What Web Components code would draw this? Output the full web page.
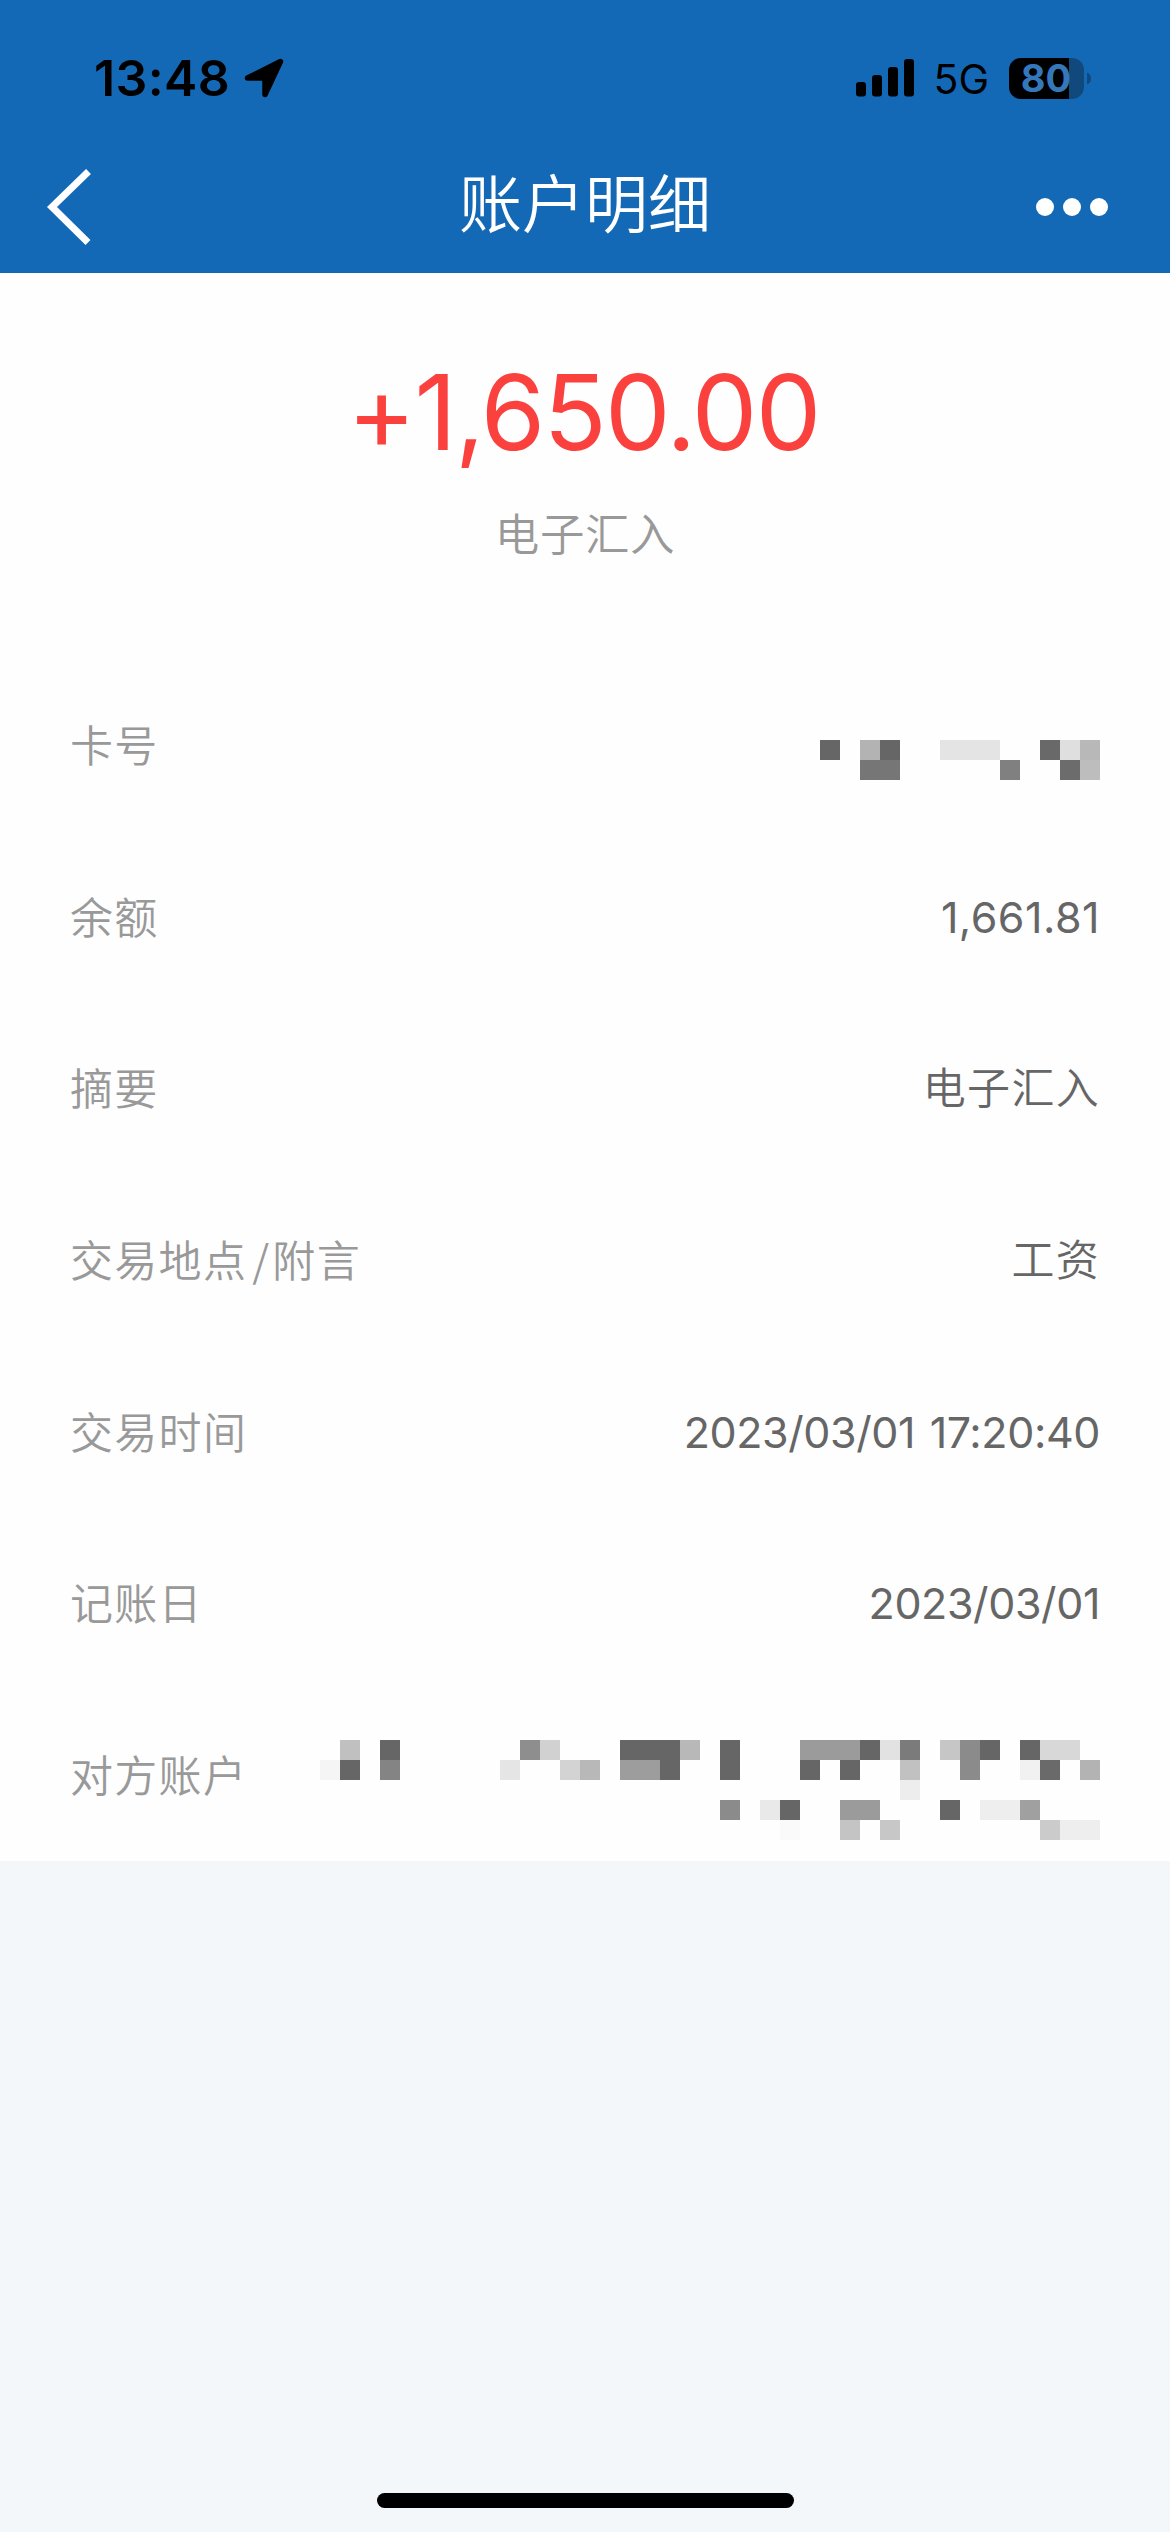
<!DOCTYPE html>
<html lang="zh-CN">
<head>
  <meta charset="UTF-8">
  <meta name="viewport" content="width=device-width, initial-scale=1.0">
  <title>账户明细</title>
  <style>
    body {
      margin: 0;
      background-color: #f3f7fa;
      font-family: Inter, "Noto Sans CJK SC", sans-serif;
    }
  </style>
</head>
<body>
  <account-screen>
    <status-bar slot="header" time="13:48" network="5G" battery="80"></status-bar>
    <nav-header slot="header">账户明细</nav-header>

    <amount-summary amount="+1,650.00">电子汇入</amount-summary>

    <detail-row label="卡号">
      <pixel-mosaic cols="14" rows="2" style="margin-top: 30px"
        cells="0,0,1,666 2,0,1,b3b3b3 3,0,1,666 2,1,2,767676 6,0,3,e4e4e4 9,1,1,808080 11,0,1,696969 12,0,1,dfdfdf 13,0,1,b8b8b8 12,1,1,6c6c6c 13,1,1,bdbdbd"></pixel-mosaic>
    </detail-row>
    <detail-row label="余额" style="--value-spacing: 0.5px">1,661.81</detail-row>
    <detail-row label="摘要" cjk>电子汇入</detail-row>
    <detail-row label="交易地点/附言" cjk>工资</detail-row>
    <detail-row label="交易时间">2023/03/01 17:20:40</detail-row>
    <detail-row label="记账日">2023/03/01</detail-row>
    <detail-row label="对方账户">
      <pixel-mosaic cols="39" rows="5" style="margin-top: 30px"
        cells="1,0,1,c0c0c0 3,0,1,666 10,0,1,8e8e8e 11,0,1,d1d1d1 15,0,3,666 18,0,1,b8b8b8 20,0,1,666 24,0,3,9b9b9b 27,0,1,666 28,0,1,e2e2e2 29,0,1,7b7b7b 31,0,1,c6c6c6 32,0,1,8b8b8b 33,0,1,666 35,0,1,666 36,0,2,d8d8d8
        0,1,1,f5f5f5 1,1,1,666 3,1,1,848484 9,1,1,e5e5e5 12,1,1,d3d3d3 13,1,1,b8b8b8 15,1,2,9d9d9d 17,1,1,666 20,1,1,666 24,1,1,666 26,1,1,666 29,1,1,c1c1c1 32,1,1,8b8b8b 35,1,1,f1f1f1 36,1,1,6a6a6a 38,1,1,b3b3b3
        29,2,1,ededed
        20,3,1,8b8b8b 22,3,1,e9e9e9 23,3,1,666 26,3,2,9b9b9b 31,3,1,666 33,3,2,eee 35,3,1,a0a0a0
        23,4,1,fafafa 26,4,1,c4c4c4 28,4,1,c7c7c7 36,4,1,cbcbcb 37,4,2,eee"></pixel-mosaic>
    </detail-row>
  </account-screen>

  <script>
    class AccountScreen extends HTMLElement {
      connectedCallback() {
        this.attachShadow({ mode: "open" });
        this.shadowRoot.innerHTML = `
          <style>
            :host {
              display: flex;
              flex-direction: column;
              height: 2532px;
              overflow: hidden;
            }

            header {
              height: 273px;
              background-color: #1469b6;
            }

            main {
              height: 1588px;
              background-color: #fefefe;
            }

            footer {
              flex: 1;
              display: flex;
              align-items: flex-end;
              justify-content: center;
              padding-bottom: 24px;
            }

            .home-indicator {
              width: 417px;
              height: 15px;
              margin-left: 1px;
              border-radius: 8px;
              background-color: #000;
            }
          </style>

          <header><slot name="header"></slot></header>
          <main><slot></slot></main>
          <footer><div class="home-indicator"></div></footer>
        `;
      }
    }

    class StatusBar extends HTMLElement {
      connectedCallback() {
        this.attachShadow({ mode: "open" });
        this.shadowRoot.innerHTML = `
          <style>
            :host {
              display: flex;
              justify-content: space-between;
              align-items: center;
              height: 156px;
              padding: 0 79px 0 94px;
              box-sizing: border-box;
              color: #000;
            }

            .left,
            .right {
              display: flex;
              align-items: center;
            }

            .time {
              font-size: 50px;
              font-weight: 600;
              letter-spacing: 0.4px;
            }

            .arrow {
              margin-left: 14px;
            }

            .network {
              margin: 2px 20px 0 19px;
              font-size: 41px;
            }

            .level {
              font-size: 38px;
              font-weight: 700;
            }

            svg {
              display: block;
              overflow: visible;
            }
          </style>

          <div class="left">
            <span class="time">${this.getAttribute("time")}</span>
            <svg class="arrow" width="40" height="40" viewBox="0 0 40 40">
              <path d="M36.500 3.500 L21 36.500 V20 H3.500 Z" stroke="#000" stroke-width="5.500" stroke-linejoin="round"/>
            </svg>
          </div>

          <div class="right">
            <svg width="58" height="38" viewBox="0 0 58 38">
              <rect x="0" y="23" width="10" height="14.500" rx="3"/>
              <rect x="16" y="16" width="10" height="21.500" rx="3"/>
              <rect x="32" y="8" width="10" height="29.500" rx="3"/>
              <rect x="48" y="0" width="10" height="37.500" rx="3"/>
            </svg>
            <span class="network">${this.getAttribute("network")}</span>
            <svg width="82" height="41" viewBox="0 0 82 41">
              <rect width="75" height="41" rx="12" fill="#12497c"/>
              <path d="M12 0 H60 V41 H12 A12 12 0 0 1 0 29 V12 A12 12 0 0 1 12 0 Z"/>
              <path d="M78 14.500 Q82 16 82 20.500 Q82 25 78 26.500 Z" fill="#12497c"/>
              <text class="level" x="37" y="34.300" text-anchor="middle" fill="#3478bb">${this.getAttribute("battery")}</text>
            </svg>
          </div>
        `;
      }
    }

    class NavHeader extends HTMLElement {
      connectedCallback() {
        this.attachShadow({ mode: "open" });
        this.shadowRoot.innerHTML = `
          <style>
            :host {
              display: grid;
              grid-template-columns: 1fr auto 1fr;
              align-items: center;
              height: 102px;
              padding: 0 46px;
              color: #fff;
            }

            h1 {
              margin: 0 0 6px;
              font-size: 63px;
              font-weight: 350;
              line-height: 1;
            }

            .more {
              justify-self: end;
              margin-right: 15px;
            }

            svg {
              display: block;
            }
          </style>

          <svg width="48" height="76" viewBox="0 0 48 76">
            <path d="M42.500 2.500 L6 38 L42 73.500" fill="none" stroke="#fff" stroke-width="7"/>
          </svg>
          <h1><slot></slot></h1>
          <svg class="more" width="74" height="18" viewBox="0 0 74 18" fill="#fff">
            <circle cx="10" cy="9" r="9"/>
            <circle cx="37" cy="9" r="9"/>
            <circle cx="64" cy="9" r="9"/>
          </svg>
        `;
      }
    }

    class AmountSummary extends HTMLElement {
      connectedCallback() {
        this.attachShadow({ mode: "open" });
        this.shadowRoot.innerHTML = `
          <style>
            :host {
              display: flex;
              flex-direction: column;
              align-items: center;
              height: 386px;
              padding-top: 79px;
              box-sizing: border-box;
            }

            .amount {
              margin-right: 3px;
              font-size: 104px;
              line-height: 120px;
              letter-spacing: -1.7px;
              color: #fb413e;
            }

            .type {
              margin-top: 33px;
              font-size: 44.5px;
              font-weight: 350;
              line-height: 60px;
              letter-spacing: 0.6px;
              color: #999;
            }
          </style>

          <div class="amount">${this.getAttribute("amount")}</div>
          <div class="type"><slot></slot></div>
        `;
      }
    }

    class DetailRow extends HTMLElement {
      connectedCallback() {
        const label = this.getAttribute("label").replace("/", "<i>/</i>");

        this.attachShadow({ mode: "open" });
        this.shadowRoot.innerHTML = `
          <style>
            :host {
              display: flex;
              justify-content: space-between;
              align-items: center;
              height: 171.7px;
              padding: 0 70px;
              font-size: 43px;
              line-height: 60px;
            }

            .label {
              margin-bottom: 4px;
              font-family: "Noto Sans CJK SC", sans-serif;
              font-weight: 350;
              letter-spacing: 1.3px;
              color: #999;
            }

            .label i {
              padding: 0 2px 0 5px;
              font-style: normal;
            }

            .value {
              letter-spacing: var(--value-spacing, -0.4px);
              word-spacing: 3px;
              color: #666;
            }

            :host([cjk]) .value {
              font-weight: 350;
              letter-spacing: 1.3px;
            }
          </style>

          <span class="label">${label}</span>
          <span class="value"><slot></slot></span>
        `;
      }
    }

    // Masks private values. cells: "col,row,span,color" separated by spaces
    class PixelMosaic extends HTMLElement {
      connectedCallback() {
        const size = 20;
        const width = this.getAttribute("cols") * size;
        const height = this.getAttribute("rows") * size;
        const rects = this.getAttribute("cells").trim().split(/\s+/).map((cell) => {
          const [col, row, span, color] = cell.split(",");
          return `<rect x="${col * size}" y="${row * size}" width="${span * size}" height="${size}" fill="#${color}"/>`;
        });

        this.attachShadow({ mode: "open" });
        this.shadowRoot.innerHTML = `
          <style>
            :host {
              display: block;
            }

            svg {
              display: block;
            }
          </style>

          <svg width="${width}" height="${height}" shape-rendering="crispEdges">${rects.join("")}</svg>
        `;
      }
    }

    customElements.define("account-screen", AccountScreen);
    customElements.define("status-bar", StatusBar);
    customElements.define("nav-header", NavHeader);
    customElements.define("amount-summary", AmountSummary);
    customElements.define("detail-row", DetailRow);
    customElements.define("pixel-mosaic", PixelMosaic);
  </script>
</body>
</html>
